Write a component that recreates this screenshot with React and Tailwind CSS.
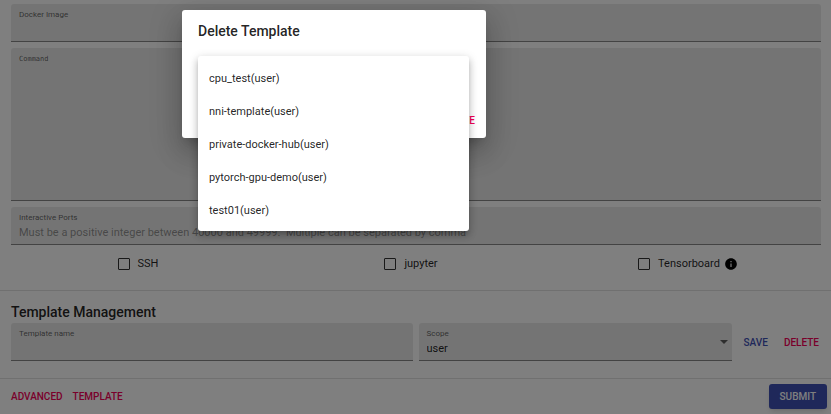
import React from "react";

const templates = [
  "cpu_test(user)",
  "nni-template(user)",
  "private-docker-hub(user)",
  "pytorch-gpu-demo(user)",
  "test01(user)",
];

const fieldBox =
  "flex flex-col rounded-t-[3px] border-b border-black/42 bg-black/9 px-2 pt-1";
const labelText = "text-[8px] leading-[14px] text-black/60";
const inputText =
  "w-full min-w-0 bg-transparent text-[11px] leading-4 text-black/87 outline-none placeholder:text-black/40";
const textButton = "h-[25px] rounded-[3px] text-[10px] font-medium uppercase";

function TextField({ id, label, placeholder, className = "" }) {
  return (
    <div className={`${fieldBox} h-[38px] ${className}`}>
      <label htmlFor={id} className={labelText}>
        {label}
      </label>
      <input id={id} type="text" placeholder={placeholder} className={inputText} />
    </div>
  );
}

function CheckOption({ label, className, children }) {
  return (
    <div className={`flex items-center justify-center ${className}`}>
      <label className="flex items-center gap-2 text-[11px] leading-4 text-black/87">
        <input
          type="checkbox"
          className="size-3 appearance-none rounded-[1px] border border-black/80"
        />
        {label}
      </label>
      {children}
    </div>
  );
}

function InfoIcon() {
  return (
    <svg viewBox="0 0 24 24" className="ml-1 size-[14px]" aria-hidden="true">
      <path
        fill="#000"
        d="M12 2C6.48 2 2 6.48 2 12s4.48 10 10 10 10-4.48 10-10S17.52 2 12 2zm1 15h-2v-6h2v6zm0-8h-2V7h2v2z"
      />
    </svg>
  );
}

export default function App() {
  return (
    <div className="relative min-h-screen overflow-hidden bg-white font-[Roboto,sans-serif]">
      <form className="flex flex-col" onSubmit={(e) => e.preventDefault()}>
        <section className="flex flex-col gap-[6px] pt-1 pr-[10px] pl-[11px]">
          <TextField id="image" label="Docker Image" />
          <div className={`${fieldBox} h-[153px]`}>
            <label
              htmlFor="command"
              className="font-['DejaVu_Sans_Mono',monospace] text-[7px] leading-[14px] text-black/60"
            >
              Command
            </label>
            <textarea id="command" className={`${inputText} flex-1 resize-none`} />
          </div>
          <TextField
            id="ports"
            label="Interactive Ports"
            placeholder="Must be a positive integer between 40000 and 49999.  Multiple can be separated by comma"
          />
        </section>

        <section className="grid h-[45px] grid-cols-3 pt-[3px] pr-[10px] pb-[10px] pl-[11px]">
          <CheckOption label="SSH" className="pr-4" />
          <CheckOption label="jupyter" className="pr-[10px]" />
          <CheckOption label="Tensorboard" className="pl-1">
            <InfoIcon />
          </CheckOption>
        </section>

        <section className="border-t border-black/12 pt-[11px] pb-[17px] pl-[11px]">
          <h2 className="text-[14px] leading-[21px] font-medium text-black/87">
            Template Management
          </h2>
          <div className="flex items-center">
            <TextField id="name" label="Template name" className="flex-[405]" />
            <div className={`${fieldBox} relative ml-[6px] h-[38px] flex-[312]`}>
              <label htmlFor="scope" className={labelText}>
                Scope
              </label>
              <select id="scope" className={`${inputText} appearance-none`}>
                <option>user</option>
              </select>
              <svg
                viewBox="0 0 10 5"
                className="pointer-events-none absolute top-[17px] right-1 h-[4px] w-2"
                aria-hidden="true"
              >
                <path d="M0 0h10L5 5z" fill="rgba(0,0,0,.6)" />
              </svg>
            </div>
            <button type="button" className={`${textButton} ml-[6px] px-[6px] text-[#3f51b5]`}>
              Save
            </button>
            <button
              type="button"
              className={`${textButton} mr-[6px] ml-1 px-[6px] text-[#f50057]`}
            >
              Delete
            </button>
          </div>
        </section>

        <footer className="flex items-center border-t border-black/12 py-[5px] pr-1 pl-[5px]">
          <button type="button" className={`${textButton} pr-[5px] pl-[6px] text-[#f50057]`}>
            Advanced
          </button>
          <button type="button" className={`${textButton} px-[5px] text-[#f50057]`}>
            Template
          </button>
          <button
            type="submit"
            className={`${textButton} ml-auto bg-[#3f51b5] px-[11px] text-white shadow-md`}
          >
            Submit
          </button>
        </footer>
      </form>

      <div className="absolute inset-0 bg-black/50" />

      <div
        role="dialog"
        aria-labelledby="dialog-title"
        className="absolute top-[10px] left-[182px] flex h-[128px] w-[304px] flex-col rounded-[3px] bg-white shadow-[0_8px_10px_-5px_rgba(0,0,0,.2),0_16px_26px_2px_rgba(0,0,0,.14),0_6px_32px_5px_rgba(0,0,0,.12)]"
      >
        <h2
          id="dialog-title"
          className="px-4 pt-[11px] text-[14px] leading-[21px] font-medium text-black/87"
        >
          Delete Template
        </h2>
        <div className="mt-auto flex justify-end p-[5px]">
          <button type="button" className={`${textButton} px-[6px] text-[#f50057]`}>
            Delete
          </button>
        </div>
      </div>

      <ul
        role="listbox"
        aria-label="Template"
        className="absolute top-[56px] left-[198px] w-[271px] rounded-[3px] bg-white pt-[6px] pb-1 shadow-[0_3px_4px_-2px_rgba(0,0,0,.2),0_5px_7px_1px_rgba(0,0,0,.14),0_2px_10px_1px_rgba(0,0,0,.12)]"
      >
        {templates.map((name) => (
          <li
            key={name}
            role="option"
            aria-selected="false"
            className="flex h-[33px] items-center px-[11px] text-[11px] leading-4 text-black/87"
          >
            {name}
          </li>
        ))}
      </ul>
    </div>
  );
}
